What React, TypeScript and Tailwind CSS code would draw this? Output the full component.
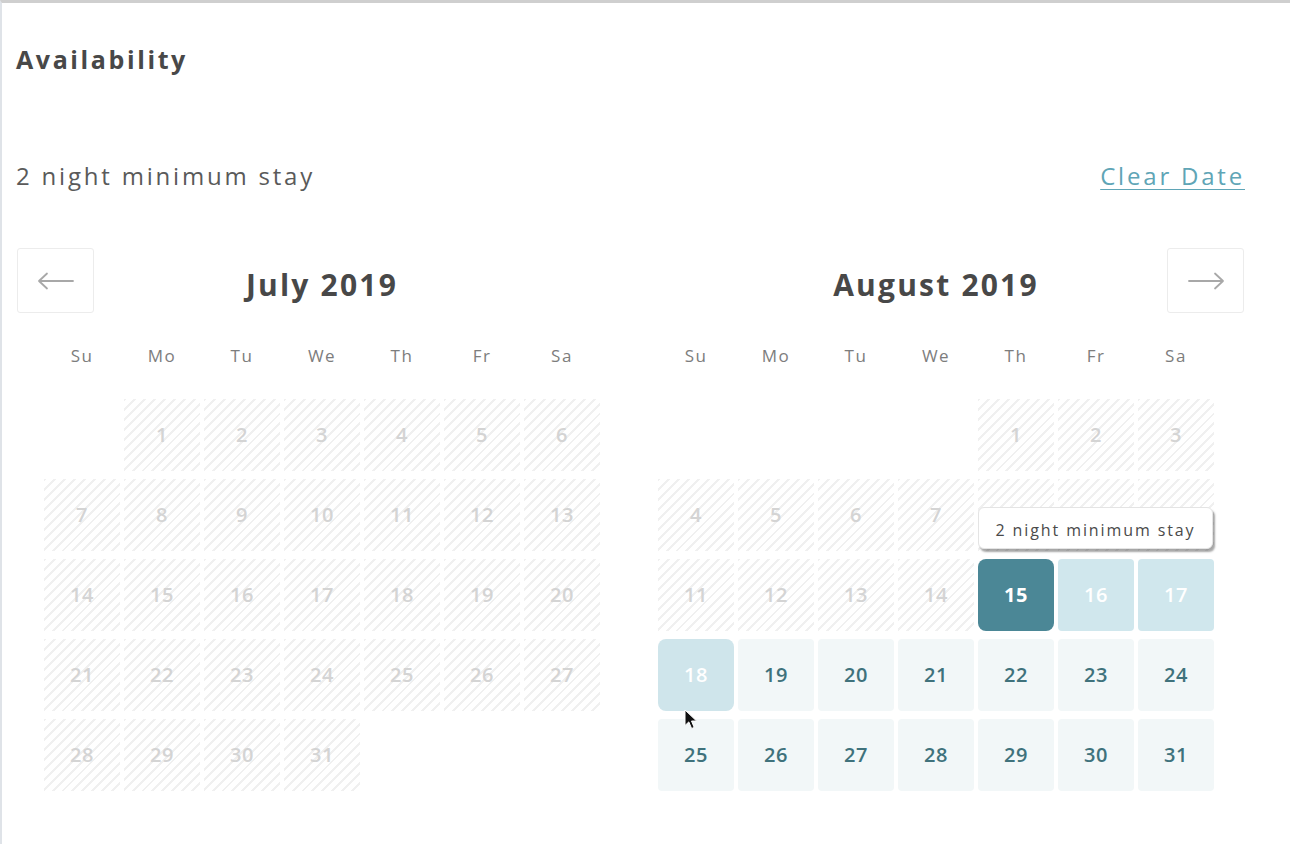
import React from "react";

type DayState = "blocked" | "selected" | "range" | "hover" | "open";

type Day = { n: number; state: DayState } | null;

const WEEKDAYS = ["Su", "Mo", "Tu", "We", "Th", "Fr", "Sa"];

function buildMonth(offset: number, total: number, stateOf: (n: number) => DayState): Day[] {
  const days: Day[] = [];
  for (let i = 0; i < offset; i++) days.push(null);
  for (let n = 1; n <= total; n++) days.push({ n, state: stateOf(n) });
  return days;
}

const JULY = buildMonth(1, 31, () => "blocked");
const AUGUST = buildMonth(4, 31, (n) => {
  if (n < 15) return "blocked";
  if (n === 15) return "selected";
  if (n === 16 || n === 17) return "range";
  if (n === 18) return "hover";
  return "open";
});

const CELL_STYLES: Record<DayState, string> = {
  blocked:
    "bg-[repeating-linear-gradient(135deg,#f0f0f0_0px,#f0f0f0_2px,#ffffff_2px,#ffffff_7px)] text-[#d4d4d4] font-semibold",
  selected: "bg-[#4b8796] text-white font-bold rounded-lg",
  range: "bg-[#d0e7ed] text-white font-semibold rounded-sm",
  hover: "bg-[#cfe5eb] text-white font-semibold rounded-lg",
  open: "bg-[#f2f7f8] text-[#3f727c] font-semibold rounded-sm",
};

function Arrow({ dir }: { dir: "left" | "right" }) {
  return (
    <svg width="38" height="20" viewBox="0 0 38 20" fill="none" className={dir === "right" ? "rotate-180" : ""}>
      <path d="M2 10H36M2 10L10 2.5M2 10L10 17.5" stroke="#a8a8a8" strokeWidth="1.8" strokeLinecap="round" strokeLinejoin="round" />
    </svg>
  );
}

function Cursor() {
  return (
    <svg width="14" height="21" viewBox="0 0 14 21" className="absolute left-[26px] top-[70px] z-10">
      <path d="M1 1V16.5L4.8 12.9L7.6 19.5L10.2 18.4L7.5 12H12.6Z" fill="#111" stroke="#fff" strokeWidth="1" strokeLinejoin="round" />
    </svg>
  );
}

function DayCell({ day }: { day: Day }) {
  if (!day) return <div className="h-[72px]" />;
  return (
    <div
      className={`relative flex h-[72px] items-center justify-center text-[20px] tracking-[0.5px] ${CELL_STYLES[day.state]}`}
    >
      {day.n}
      {day.state === "selected" && (
        <div className="absolute bottom-[calc(100%+10px)] left-0 z-10 flex h-[42px] w-[235px] items-center justify-center rounded-md border border-[#e4e4e4] bg-white pt-[4px] text-[16px] font-normal tracking-[1.9px] text-[#4a4a4a] shadow-[2px_3px_2px_rgba(0,0,0,0.35)]">
          2 night minimum stay
        </div>
      )}
      {day.state === "hover" && <Cursor />}
    </div>
  );
}

function Month({ title, days }: { title: string; days: Day[] }) {
  return (
    <div className="w-[556px]">
      <div className="flex h-[72px] items-center justify-center text-[30px] font-bold tracking-[2.2px] text-[#484848]">{title}</div>
      <div className="grid h-[72px] grid-cols-7 items-center gap-x-[4px]">
        {WEEKDAYS.map((d) => (
          <div key={d} className="text-center text-[17px] tracking-[1.5px] text-[#7d7d7d]">
            {d}
          </div>
        ))}
      </div>
      <div className="mt-[7px] grid grid-cols-7 gap-x-[4px] gap-y-[8px]">
        {days.map((day, i) => (
          <DayCell key={i} day={day} />
        ))}
      </div>
    </div>
  );
}

export default function App() {
  return (
    <div className="h-[844px] w-full overflow-hidden border-l-2 border-t-[3px] border-l-[#dfe3e8] border-t-[#cfcfcf] bg-white font-['Open_Sans',sans-serif]">
      <div className="pl-[14px] pr-[45px]">
        <h2 className="pt-[42px] text-[25px] font-bold leading-[28px] tracking-[2.6px] text-[#484848]">Availability</h2>

        <div className="mt-[89px] flex h-[28px] items-center justify-between text-[24px] tracking-[2.8px]">
          <span className="text-[#5a5a5a]">2 night minimum stay</span>
          <a className="text-[#5fa5b6] underline decoration-1 underline-offset-4">Clear Date</a>
        </div>

        {/* Calendar */}
        <div className="relative mt-[58px]">
          <button className="absolute left-[1px] top-0 z-10 flex h-[65px] w-[77px] items-center justify-center rounded-[3px] border border-[#ececec] bg-white">
            <Arrow dir="left" />
          </button>
          <button className="absolute right-[1px] top-0 z-10 flex h-[65px] w-[77px] items-center justify-center rounded-[3px] border border-[#ececec] bg-white">
            <Arrow dir="right" />
          </button>

          <div className="ml-[28px] flex gap-[58px]">
            <Month title="July 2019" days={JULY} />
            <Month title="August 2019" days={AUGUST} />
          </div>
        </div>
      </div>
    </div>
  );
}
